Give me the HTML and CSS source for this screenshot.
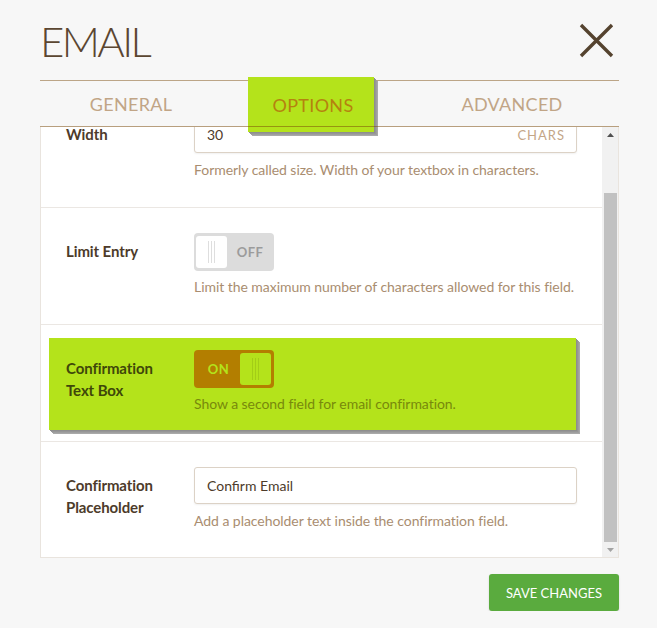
FILE: index.html
```html
<!DOCTYPE html>
<html lang="en">
<head>
<meta charset="utf-8">
<title>Email field options</title>
<link rel="stylesheet" href="styles.css">
</head>
<body>
<div class="modal">
  <header class="head">
    <h1 class="title">EMAIL</h1>
    <button class="close" aria-label="Close">
      <svg width="35" height="35" viewBox="0 0 35 35"><path d="M2 2L33 33M33 2L2 33" stroke="#55432f" stroke-width="3.4" fill="none"/></svg>
    </button>
  </header>
  <nav class="tabs">
    <div class="tab"><span>GENERAL</span></div>
    <div class="tab active"><span>OPTIONS</span></div>
    <div class="tab"><span>ADVANCED</span></div>
  </nav>
  <section class="panel">
    <div class="rows">
      <div class="row first">
        <div class="label">Width</div>
        <div class="field">
          <div class="input"><span>30</span><span class="suffix">CHARS</span></div>
          <p class="desc">Formerly called size. Width of your textbox in characters.</p>
        </div>
      </div>
      <div class="row">
        <div class="label">Limit Entry</div>
        <div class="field">
          <div class="toggle off">
            <div class="knob"><i></i><i></i><i></i></div>
            <div class="state">OFF</div>
          </div>
          <p class="desc">Limit the maximum number of characters allowed for this field.</p>
        </div>
      </div>
      <div class="row hl">
        <div class="hl-box">
          <div class="label">Confirmation<br>Text Box</div>
          <div class="field">
            <div class="toggle on">
              <div class="state">ON</div>
              <div class="knob"><i></i><i></i><i></i></div>
            </div>
            <p class="desc">Show a second field for email confirmation.</p>
          </div>
        </div>
      </div>
      <div class="row last">
        <div class="label">Confirmation<br>Placeholder</div>
        <div class="field">
          <div class="input"><span>Confirm Email</span></div>
          <p class="desc">Add a placeholder text inside the confirmation field.</p>
        </div>
      </div>
    </div>
    <div class="scrollbar">
      <div class="sb-btn"><svg width="7" height="4" viewBox="0 0 7 4"><path d="M0 4L3.5 0L7 4Z" fill="#505050"/></svg></div>
      <div class="sb-track"><div class="thumb"></div></div>
      <div class="sb-btn"><svg width="7" height="4" viewBox="0 0 7 4"><path d="M0 0L3.5 4L7 0Z" fill="#a3a3a3"/></svg></div>
    </div>
  </section>
  <footer class="foot">
    <button class="save">SAVE CHANGES</button>
  </footer>
</div>
</body>
</html>
```

FILE: styles.css
```css
* { box-sizing: border-box; }
html, body { margin: 0; padding: 0; }
body {
  background: #f7f7f7;
  font-family: Lato, "Liberation Sans", sans-serif;
  color: #4d3b2a;
}
.modal { width: 579px; margin-left: 40px; }

.head {
  height: 81px;
  border-bottom: 1px solid #bca587;
  display: flex;
  justify-content: space-between;
  align-items: flex-start;
  padding-top: 20px;
}
.title {
  margin: 0;
  font-weight: 300;
  font-size: 42px;
  line-height: 42px;
  letter-spacing: -2.6px;
  color: #5b4631;
}
.close {
  margin: 3px 5px 0 0;
  padding: 0;
  border: 0;
  background: none;
  width: 35px;
  height: 35px;
  display: block;
}
.close svg { display: block; }

.tabs {
  position: relative;
  display: grid;
  grid-template-columns: 182px 183px 214px;
  height: 46px;
  padding-bottom: 1px;
}
.tabs::after {
  content: "";
  position: absolute;
  left: 0; right: 0; bottom: 0;
  height: 1px;
  background: rgba(122, 72, 6, 0.5);
  z-index: 3;
}
.tab {
  display: flex;
  justify-content: center;
  align-items: center;
  font-size: 18px;
  color: #c1a586;
  letter-spacing: 0.3px;
}
.tab.active { align-items: stretch; }
.tab.active span {
  position: relative;
  z-index: 2;
  width: 126px;
  margin: -4px 5px -6px 0;
  padding-left: 4px;
  background: #b4e31b;
  color: #b5820f;
  display: flex;
  align-items: center;
  justify-content: center;
  box-shadow: 1px 1px 0 #8e8e8e, 2px 2px 0 #969696, 3px 3px 0 #9f9f9f, 4px 4px 0 #a9a9a9;
}

.panel {
  display: flex;
  height: 431px;
  background: #fff;
  border: 1px solid #e9e4de;
  border-top: 0;
}
.rows { flex: 1; overflow: hidden; }
.row {
  display: flex;
  padding: 25px 25px 28px 25px;
  border-bottom: 1px solid #ebe7e3;
}
.row.first { margin-top: -36px; }
.row.last { border-bottom: 0; }
.label {
  width: 128px;
  flex: none;
  padding-top: 7px;
  font-weight: 700;
  font-size: 15px;
  line-height: 22px;
  letter-spacing: -0.1px;
  color: #4d3b2a;
}
.field { flex: 1; min-width: 0; }
.desc {
  margin: 7px 0 0;
  font-size: 14px;
  line-height: 18px;
  letter-spacing: -0.05px;
  color: #a98d70;
}
.input {
  height: 37px;
  border: 1px solid #dcd2c6;
  border-radius: 3px;
  box-shadow: 0 1px 2px rgba(0, 0, 0, 0.06);
  padding: 0 11px 0 12px;
  display: flex;
  align-items: center;
  justify-content: space-between;
  font-size: 14px;
  color: #4d3b2a;
  background: #fff;
}
.input + .desc { margin-top: 8px; }
.suffix { font-size: 13px; letter-spacing: 1px; color: #c4a687; }

.toggle {
  width: 80px;
  height: 38px;
  border-radius: 4px;
  padding: 3px;
  display: flex;
  font-size: 13px;
  font-weight: 700;
  letter-spacing: 0.5px;
}
.toggle .state { flex: 1; display: flex; align-items: center; justify-content: center; }
.knob {
  width: 31px;
  border-radius: 3px;
  display: flex;
  justify-content: center;
  align-items: center;
  gap: 2px;
}
.knob i { width: 1px; height: 22px; background: #dedede; }
.toggle.off { background: #dcdcdc; color: #9b9b9b; padding-left: 2px; }
.off .state { padding-left: 2px; }
.off .knob { background: #fff; }
.toggle.on { background: #b37e00; color: #b4e31b; }
.on .knob { background: #b4e31b; }
.on .knob i { background: #a3cd17; }

.row.hl { padding: 13px 26px 11px 8px; }
.hl-box {
  flex: 1;
  display: flex;
  padding: 12px 0 17px 17px;
  background: #b4e31b;
  box-shadow: 1px 1px 0 #8e8e8e, 2px 2px 0 #969696, 3px 3px 0 #9f9f9f, 4px 4px 0 #a9a9a9;
}
.hl .label { color: #3f470a; }
.hl .desc { color: #78890c; }

.scrollbar {
  width: 16px;
  flex: none;
  background: #f1f1f1;
  display: flex;
  flex-direction: column;
}
.sb-btn { height: 15px; display: flex; align-items: center; justify-content: center; }
.sb-btn svg { display: block; }
.sb-track { flex: 1; padding: 51px 1px 0 2px; }
.thumb { height: 100%; background: #c1c1c1; }

.foot { display: flex; justify-content: flex-end; padding-top: 16px; }
.save {
  height: 37px;
  width: 130px;
  border: 0;
  border-radius: 3px;
  background: #5aab3e;
  color: #fff;
  font-family: Lato, "Liberation Sans", sans-serif;
  font-size: 13px;
  letter-spacing: 0;
  box-shadow: 0 1px 2px rgba(0, 0, 0, 0.15);
}
```
